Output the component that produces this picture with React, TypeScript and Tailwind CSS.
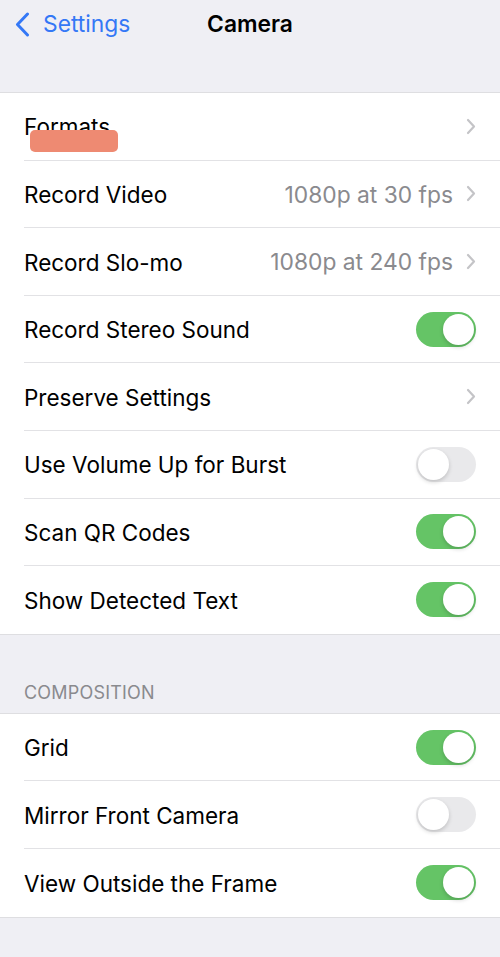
import React from "react";

type Row = {
  label: string;
  value?: string;
  chevron?: boolean;
  toggle?: boolean;
  on?: boolean;
  mark?: boolean;
};

const mainRows: Row[] = [
  { label: "Formats", chevron: true, mark: true },
  { label: "Record Video", value: "1080p at 30 fps", chevron: true },
  { label: "Record Slo-mo", value: "1080p at 240 fps", chevron: true },
  { label: "Record Stereo Sound", toggle: true, on: true },
  { label: "Preserve Settings", chevron: true },
  { label: "Use Volume Up for Burst", toggle: true, on: false },
  { label: "Scan QR Codes", toggle: true, on: true },
  { label: "Show Detected Text", toggle: true, on: true },
];

const compositionRows: Row[] = [
  { label: "Grid", toggle: true, on: true },
  { label: "Mirror Front Camera", toggle: true, on: false },
  { label: "View Outside the Frame", toggle: true, on: true },
];

const Chevron = () => (
  <svg width="10" height="17" viewBox="0 0 10 17" className="ml-[13px] shrink-0">
    <path
      d="M2 2l6 6.5L2 15"
      fill="none"
      stroke="#c4c4c7"
      strokeWidth="2.2"
      strokeLinecap="round"
      strokeLinejoin="round"
    />
  </svg>
);

const Toggle = ({ on }: { on: boolean }) => (
  <div
    className={
      on
        ? "flex h-[35px] w-[60px] items-center justify-end rounded-full bg-[#65c466] p-[2px]"
        : "flex h-[35px] w-[60px] items-center justify-start rounded-full bg-[#e9e9eb] p-[2px]"
    }
  >
    <div className="h-[31px] w-[31px] rounded-full bg-white shadow-[0_2px_4px_rgba(0,0,0,0.18)]" />
  </div>
);

const SettingsRow = ({ row, last }: { row: Row; last: boolean }) => (
  <div className="pl-6">
    <div
      className={
        last
          ? "flex h-[67.6px] items-center pr-6"
          : "flex h-[67.6px] items-center border-b border-[#e2e2e5] pr-6"
      }
    >
      <span className="relative pt-[2px] text-[22.5px] text-black">
        {row.label}
        {row.mark && (
          <span className="absolute left-[6px] top-[22px] h-[22px] w-[88px] rounded-[5px] bg-[#ee8a72] blur-[0.6px]" />
        )}
      </span>
      <div className="flex-1" />
      {row.value && (
        <span className="pt-[2px] text-[22.8px] text-[#8a8a8e]">{row.value}</span>
      )}
      {row.chevron && <Chevron />}
      {row.toggle && <Toggle on={!!row.on} />}
    </div>
  </div>
);

const Group = ({ rows }: { rows: Row[] }) => (
  <div className="border-y border-[#dedee1] bg-white">
    {rows.map((row, i) => (
      <SettingsRow key={row.label} row={row} last={i === rows.length - 1} />
    ))}
  </div>
);

export default function App() {
  return (
    <div
      className="min-h-[957px] w-[500px] bg-[#efeff4]"
      style={{ fontFamily: "Inter, 'Liberation Sans', sans-serif" }}
    >
      <div className="relative flex h-[48px] items-center">
        <div className="flex items-center pl-[15px] text-[#3478f6]">
          <svg width="15" height="25" viewBox="0 0 15 25">
            <path
              d="M12.5 2L2.5 12.5l10 10.5"
              fill="none"
              stroke="#3478f6"
              strokeWidth="3"
              strokeLinecap="round"
              strokeLinejoin="round"
            />
          </svg>
          <span className="ml-[13px] text-[22.8px]">Settings</span>
        </div>
        <span className="absolute left-1/2 -translate-x-1/2 text-[22.8px] font-semibold text-black">
          Camera
        </span>
      </div>
      <div className="h-[44px]" />
      <Group rows={mainRows} />
      <div className="flex h-[78px] items-end px-6 pb-[7px]">
        <span className="text-[18px] tracking-[0.2px] text-[#8a8a8e]">COMPOSITION</span>
      </div>
      <Group rows={compositionRows} />
    </div>
  );
}
